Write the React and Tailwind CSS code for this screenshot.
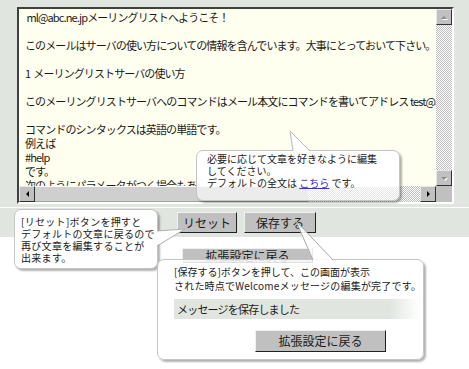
import React from 'react'

const lines = [
  ' ml@abc.ne.jpメーリングリストへようこそ！',
  '',
  'このメールはサーバの使い方についての情報を含んでいます。大事にとっておいて下さい。',
  '',
  '1  メーリングリストサーバの使い方',
  '',
  'このメーリングリストサーバへのコマンドはメール本文にコマンドを書いてアドレス test@abc.ne.jp に送ってください。',
  '',
  'コマンドのシンタックスは英語の単語です。',
  '例えば',
  '#help',
  'です。',
  '次のようにパラメータがつく場合もあります。',
]

const checker = 'bg-[repeating-conic-gradient(#bdbdbd_0_25%,#ffffff_0_50%)] bg-[length:2px_2px]'

function ScrollBtn({ dir, dim }) {
  const color = dim ? '#8a8a8a' : '#000000'
  const pts = {
    up: '4,9 10,9 7,6',
    down: '4,6 10,6 7,9',
    left: '9,4 9,10 6,7',
    right: '6,4 6,10 9,7',
  }[dir]
  return (
    <div className="w-[16px] h-[16px] bg-[#c0c0c0] border border-t-[#e8e8e8] border-l-[#e8e8e8] border-r-[#303030] border-b-[#303030] flex items-center justify-center shrink-0">
      <svg width="14" height="14" viewBox="0 0 14 14">
        {dim && <polygon points={pts} fill="#ffffff" transform="translate(1,1)" />}
        <polygon points={pts} fill={color} />
      </svg>
    </div>
  )
}

function Button({ className, children }) {
  return (
    <div className={`bg-[#c0c0c0] border border-t-[#f0f0f0] border-l-[#f0f0f0] border-r-[#202020] border-b-[#202020] flex items-center justify-center text-[12px] text-[#1a1a1a] ${className}`}>
      {children}
    </div>
  )
}

export default function App() {
  return (
    <div className="relative w-[469px] h-[369px] overflow-hidden bg-white text-[#1a1a1a] font-['Noto_Sans_CJK_JP','Noto_Sans_CJK_SC',sans-serif]">
      {/* gray top area */}
      <div className="h-[237px] bg-[#e0e5e0] flex flex-col">
        <div className="h-[207px] pt-[7px] pl-[17px]">
          {/* textarea */}
          <div className="w-[437px] h-[197px] border-2 border-t-[#404040] border-l-[#404040] border-r-white border-b-white grid grid-cols-[417px_16px] grid-rows-[177px_16px]">
            <div className="bg-[#fffff0] overflow-hidden pt-px pl-[6px] text-[11px] tracking-[-0.9px] leading-[14px] whitespace-pre">
              {lines.map((l, i) => (
                <div key={i} className="h-[14px]">{l}</div>
              ))}
            </div>
            <div className="flex flex-col">
              <ScrollBtn dir="up" dim />
              <div className={`flex-1 ${checker}`} />
              <ScrollBtn dir="down" dim />
            </div>
            <div className="flex">
              <ScrollBtn dir="left" />
              <div className="w-[273px] bg-[#cfcfcf] border-t border-t-white border-b border-b-[#a0a0a0]" />
              <div className={`flex-1 ${checker}`} />
              <ScrollBtn dir="right" />
            </div>
            <div className="bg-[#c0c0c0]" />
          </div>
        </div>
        <div className="h-px bg-white" />
        <div className="flex pl-[177px] pt-[4px] gap-[7px]">
          <Button className="w-[60px] h-[21px]">リセット</Button>
          <Button className="w-[72px] h-[21px]">保存する</Button>
        </div>
      </div>

      <div className="pl-[182px] pt-[11px]">
        <Button className="w-[131px] h-[15px]">拡張設定に戻る</Button>
      </div>

      {/* callout 1 */}
      <div className="absolute left-[196px] top-[150px] w-[204px] h-[51px] rounded-[7px] bg-[linear-gradient(to_bottom,#ffffff_36px,rgba(255,255,255,0.6)_36px)] border border-[#c4c4c4] shadow-[2px_2px_2px_rgba(0,0,0,0.3)] pt-[2px] pl-[10px] text-[10px] leading-[12px] whitespace-nowrap">
        <div>必要に応じて文章を好きなように編集</div>
        <div>してください。</div>
        <div>デフォルトの全文は <span className="text-[#3a2ee0] underline">こちら</span> です。</div>
      </div>

      {/* callout 2 */}
      <div className="absolute left-[14px] top-[209px] w-[144px] h-[60px] rounded-[7px] bg-white border border-[#c4c4c4] shadow-[2px_2px_2px_rgba(0,0,0,0.3)] pt-[6px] pl-[6px] text-[10px] leading-[12px] tracking-[0.3px] whitespace-nowrap">
        <div>[リセット]ボタンを押すと</div>
        <div>デフォルトの文章に戻るので</div>
        <div>再び文章を編集することが</div>
        <div>出来ます。</div>
      </div>

      {/* callout 3 */}
      <div className="absolute left-[157px] top-[259px] w-[267px] h-[101px] rounded-[7px] bg-white/85 border border-[#c4c4c4] shadow-[2px_2px_2px_rgba(0,0,0,0.3)] pt-[5px] text-[10px] leading-[14px] whitespace-nowrap">
        <div className="pl-[16px]">[保存する]ボタンを押して、この画面が表示</div>
        <div className="pl-[16px] tracking-[0.2px]">された時点でWelcomeメッセージの編集が完了です。</div>
        <div className="ml-[16px] mt-[6px] w-[245px] h-[20px] flex items-center pl-[3px] text-[11px] tracking-[-0.8px] bg-[linear-gradient(to_right,#e0e5e0_88%,#ffffff)]">
          メッセージを保存しました
        </div>
        <div className="pl-[97px] mt-[11px]">
          <Button className="w-[131px] h-[22px]">拡張設定に戻る</Button>
        </div>
      </div>

      {/* callout tails */}
      <svg className="absolute inset-0 pointer-events-none" width="469" height="369">
        <polygon points="293,152 290,131 310,152" fill="#ffffff" />
        <polyline points="293,151 290,131 310,151" fill="none" stroke="#b8b8b8" strokeWidth="1" />
        <polygon points="156,231 185,229 156,246" fill="#ffffff" />
        <polyline points="157,231 185,229 157,246" fill="none" stroke="#b0b0b0" strokeWidth="1" />
        <polygon points="313,261 296,221 333,261" fill="#ffffff" fillOpacity="0.9" />
        <polyline points="313,260 296,221 333,260" fill="none" stroke="#a8a8a8" strokeWidth="1" />
      </svg>
    </div>
  )
}
